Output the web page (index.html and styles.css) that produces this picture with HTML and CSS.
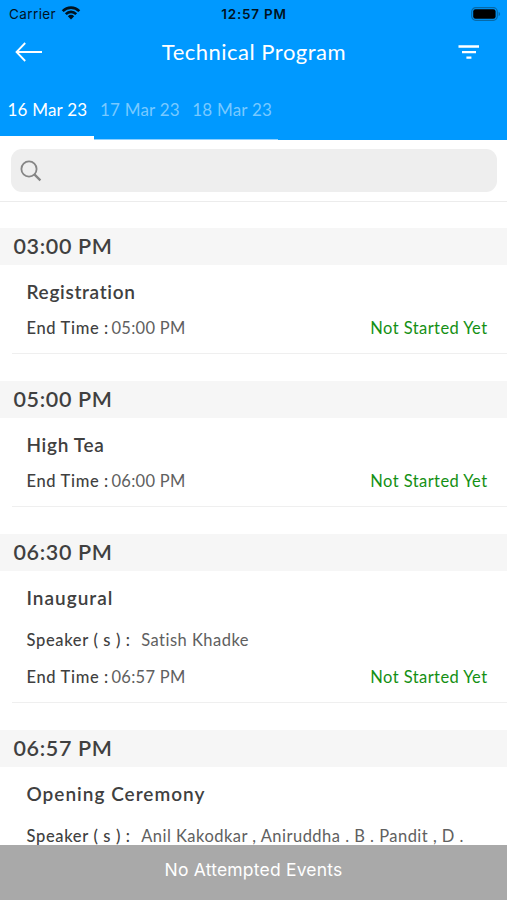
FILE: index.html
```html
<!DOCTYPE html>
<html lang="en">
<head>
<meta charset="utf-8">
<title>Technical Program</title>
<link rel="stylesheet" href="styles.css">
</head>
<body>
<div class="app">
  <header class="header">
    <div class="status">
      <div class="carrier"><span>Carrier</span>
        <svg width="20" height="16" viewBox="0 0 20 16" fill="none" stroke="#00131f" stroke-width="2.7"><path d="M1.7 6.1C6.4 1.5 13.6 1.5 18.3 6.1M4.8 9.1C7.8 6.2 12.2 6.2 15.2 9.1"/><path d="M6.8 11.2C8.7 9.4 11.3 9.4 13.2 11.2L10 14.5Z" fill="#00131f" stroke="none"/></svg>
      </div>
      <span class="clock">12:57 PM</span>
      <svg class="battery" width="30" height="15" viewBox="0 0 30 15"><rect x=".7" y=".7" width="25.6" height="12.6" rx="4" fill="none" stroke="#0669a8" stroke-width="1.2"/><rect x="2.2" y="2.3" width="22.4" height="9.4" rx="2.3" fill="#000"/><path d="M27.6 4.8c2 1 2 3.4 0 4.4z" fill="#0669a8"/></svg>
    </div>
    <div class="nav">
      <svg width="28" height="20" viewBox="0 0 28 20" fill="none" stroke="#fff" stroke-width="1.8"><path d="M10.2 1L1.5 10l8.7 9M1.5 10H27"/></svg>
      <h1>Technical Program</h1>
      <svg width="22" height="16" viewBox="0 0 22 16" stroke="#fff" stroke-width="2.3"><path d="M.5 2.5h20.5M4 8.1h14M8.4 13.7h5"/></svg>
    </div>
    <nav class="tabs">
      <span class="tab active">16 Mar 23</span>
      <span class="tab">17 Mar 23</span>
      <span class="tab">18 Mar 23</span>
    </nav>
  </header>
  <div class="search">
    <div class="field"><svg width="22" height="22" viewBox="0 0 22 22" fill="none" stroke="#858585"><circle cx="9" cy="9" r="7.6" stroke-width="1.8"/><path d="M14.4 14.4l6 6" stroke-width="2.3"/></svg></div>
  </div>
  <main class="list">
    <section>
      <h2>03:00 PM</h2>
      <div class="event">
        <h3>Registration</h3>
        <div class="row"><b>End Time :</b><span class="value">05:00 PM</span><span class="state">Not Started Yet</span></div>
      </div>
    </section>
    <section>
      <h2>05:00 PM</h2>
      <div class="event">
        <h3>High Tea</h3>
        <div class="row"><b>End Time :</b><span class="value">06:00 PM</span><span class="state">Not Started Yet</span></div>
      </div>
    </section>
    <section>
      <h2>06:30 PM</h2>
      <div class="event">
        <h3 class="wide">Inaugural</h3>
        <div class="row speakers"><b>Speaker ( s ) :</b><span class="value">Satish Khadke</span></div>
        <div class="row"><b>End Time :</b><span class="value">06:57 PM</span><span class="state">Not Started Yet</span></div>
      </div>
    </section>
    <section>
      <h2>06:57 PM</h2>
      <div class="event">
        <h3 class="wide">Opening Ceremony</h3>
        <div class="row speakers"><b>Speaker ( s ) :</b><span class="value">Anil Kakodkar , Aniruddha . B . Pandit , D .</span></div>
      </div>
    </section>
  </main>
  <footer>No Attempted Events</footer>
</div>
</body>
</html>
```
FILE: styles.css
```css
* { box-sizing: border-box; }
body { margin: 0; background: #fff; color: #404040; font-family: Lato, sans-serif; }
h1, h2, h3 { margin: 0; }
svg { display: block; flex: none; }
.app { height: 900px; display: flex; flex-direction: column; overflow: hidden; }
.header { height: 140px; flex: none; background: #0099ff; display: flex; flex-direction: column; }
.status { height: 28px; padding: 0 6px 0 9px; display: grid; grid-template-columns: 1fr auto 1fr; align-items: center; font: 13.5px Inter, sans-serif; color: #00131f; }
.carrier { display: flex; align-items: center; gap: 5px; letter-spacing: .4px; }
.carrier svg { margin-top: -2px; }
.clock { font-weight: 600; letter-spacing: .75px; margin-right: 2px; }
.battery { justify-self: end; }
.nav { height: 48px; padding: 0 27px 2px 15px; display: flex; align-items: center; justify-content: space-between; color: #fff; }
.nav svg { margin-top: 2px; }
.nav h1 { font-size: 22px; font-weight: 400; letter-spacing: .5px; margin-left: 7px; white-space: nowrap; }
.tabs { flex: 1; display: flex; }
.tab { width: 92.3px; padding: 23px 0 0 6.5px; font-size: 17px; line-height: 22px; letter-spacing: .2px; white-space: nowrap; color: #78c9ff; border-bottom: 1px solid #8dd0ff; }
.tab.active { width: 93.5px; padding-left: 7.5px; color: #fff; border-bottom: 4px solid #fff; }
.search { height: 62px; flex: none; padding: 9px 10px 9px 11px; border-bottom: 1px solid #ececec; }
.field { height: 43px; border-radius: 11px; background: #eee; display: flex; align-items: center; padding-left: 9px; }
.list { flex: 1; min-height: 0; overflow: hidden; padding-top: 26px; }
section { margin-bottom: 27px; }
h2 { height: 36.5px; padding-left: 13.5px; background: #f6f6f6; font-size: 21.5px; line-height: 36px; font-weight: 600; letter-spacing: .65px; }
.event { margin-left: 12px; padding: 14.5px 19.5px 13.5px 14.5px; border-bottom: 1px solid #efefef; }
h3 { font-size: 19px; line-height: 25px; font-weight: 600; letter-spacing: .68px; }
h3.wide { letter-spacing: 1px; }
.row { display: flex; align-items: baseline; margin-top: 11.5px; line-height: 24px; font-size: 16.5px; white-space: nowrap; }
.row b { font-weight: 500; letter-spacing: .65px; }
.value { margin-left: 2.5px; color: #606060; letter-spacing: .3px; }
.speakers { margin-top: 17.5px; }
.speakers .value { margin-left: 10.5px; letter-spacing: .48px; }
.speakers + .row { margin-top: 13px; }
.state { margin-left: auto; color: #149014; letter-spacing: .42px; }
footer { height: 55px; flex: none; background: #a9a9a9; color: #fff; text-align: center; font: 17.5px/50px Inter, sans-serif; letter-spacing: .2px; }
```
